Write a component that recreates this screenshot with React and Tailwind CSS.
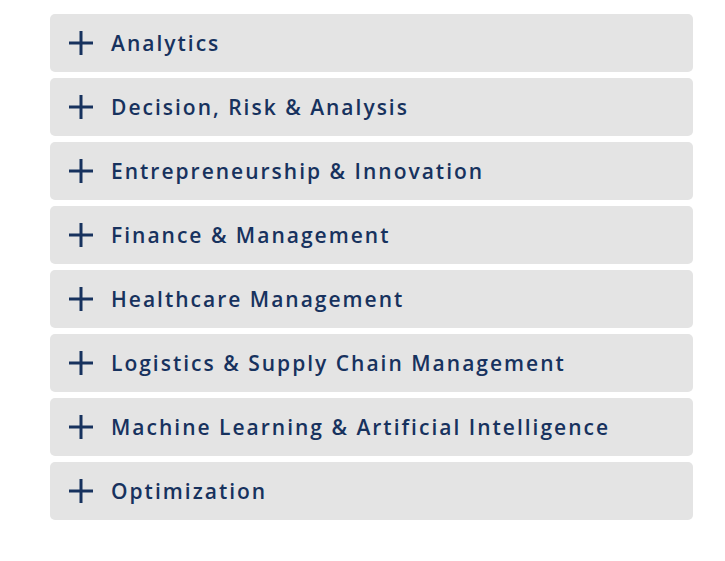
const topics = [
  'Analytics',
  'Decision, Risk & Analysis',
  'Entrepreneurship & Innovation',
  'Finance & Management',
  'Healthcare Management',
  'Logistics & Supply Chain Management',
  'Machine Learning & Artificial Intelligence',
  'Optimization',
];

function Plus() {
  return (
    <svg width="26" height="26" viewBox="0 0 26 26" className="shrink-0">
      <path d="M13 1v24M1 13h24" stroke="#17325e" strokeWidth="3" />
    </svg>
  );
}

export default function App() {
  return (
    <div className="min-h-[561px] bg-white pt-[14px] pl-[50px] pr-[32px]">
      <div className="flex flex-col gap-[6px]">
        {topics.map((t) => (
          <button
            key={t}
            className="flex h-[58px] w-[643px] items-center gap-[17px] rounded-[5px] bg-[#e4e4e4] pl-[18px] text-left"
          >
            <Plus />
            <span className="pt-[2px] font-['Open_Sans',sans-serif] text-[21px] font-semibold tracking-[2px] text-[#17325e]">
              {t}
            </span>
          </button>
        ))}
      </div>
    </div>
  );
}
